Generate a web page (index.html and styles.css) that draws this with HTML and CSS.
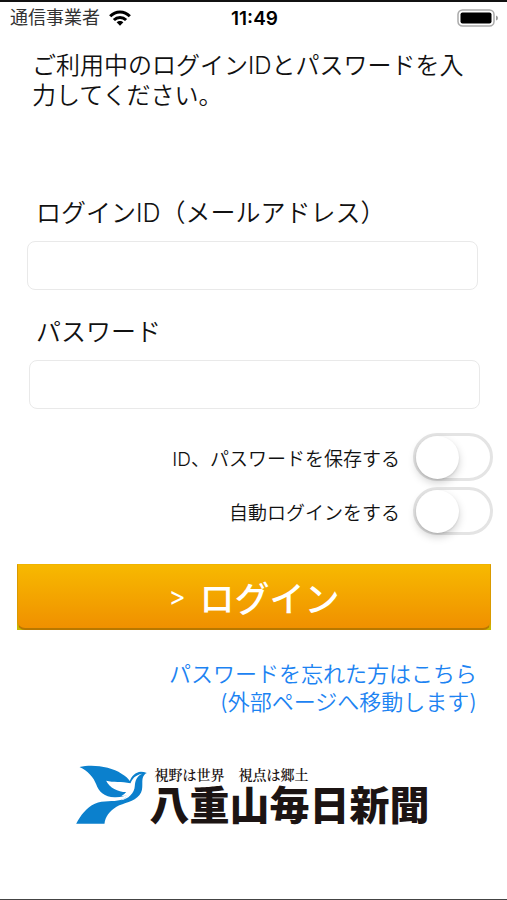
FILE: index.html
```html
<!DOCTYPE html>
<html lang="ja">
<head>
<meta charset="utf-8">
<meta name="viewport" content="width=device-width, initial-scale=1">
<title>ログイン</title>
<link rel="stylesheet" href="styles.css">
</head>
<body>
<header class="status">
  <div class="carrier">
    <span>通信事業者</span>
    <svg class="wifi" viewBox="0 0 22 16" aria-hidden="true">
      <g fill="none" stroke="#000" stroke-width="3">
        <path d="M1.2 6.2C6.6.5 15.4.5 20.8 6.2"/>
        <path d="M4.9 10C8.3 6.5 13.7 6.5 17.1 10"/>
      </g>
      <path d="M7.6 12.3C9.5 10.5 12.5 10.5 14.4 12.3L11 15.8Z"/>
    </svg>
  </div>
  <time class="clock">11:49</time>
  <svg class="battery" viewBox="0 0 42 18" aria-hidden="true">
    <rect x="1" y="1" width="36" height="16" rx="4.5" fill="#fff" stroke="#aaa" stroke-width="1.5"/>
    <rect x="3.5" y="3.5" width="31" height="11" rx="2"/>
    <path d="M39 6.5Q41 7 41 9T39 11.5Z" fill="#999"/>
  </svg>
</header>
<main>
  <p class="lead">ご利用中のログインIDとパスワードを入力してください。</p>
  <form class="login">
    <div class="field">
      <label for="login-id">ログインID（メールアドレス）</label>
      <input id="login-id" type="email">
    </div>
    <div class="field field-password">
      <label for="password">パスワード</label>
      <input id="password" type="password">
    </div>
    <div class="options">
      <label class="option">ID、パスワードを保存する<input class="switch" type="checkbox" role="switch"></label>
      <label class="option">自動ログインをする<input class="switch" type="checkbox" role="switch"></label>
    </div>
    <div class="submit-frame">
      <button class="submit" type="submit"><span class="arrow">&gt;</span>ログイン</button>
    </div>
  </form>
  <a class="forgot" href="#">パスワードを忘れた方はこちら<br>(外部ページへ移動します)</a>
  <div class="brand">
    <svg class="bird" viewBox="45 43 212 177" aria-hidden="true">
      <path fill="#0b80cd" d="M55 49C95 40 150 48 181 69Q199 79 206 91C211 76 223 64 239 63Q248 63 257 67Q247 71 244 85C242 103 247 117 235 133C219 154 188 156 166 168C145 181 132 198 130 219L45 219C59 193 76 170 101 159C127 148 156 154 178 148Q196 144 207 128Q187 141 160 140C130 139 113 124 105 101C97 79 80 61 55 49Z"/>
      <path fill="#fff" d="M135 90C156 96 181 91 208 98C213 84 222 73 243 69C226 77 222 90 221 105C220 127 202 145 178 149Q193 143 202 133Q190 137 181 136Q190 131 195 124C170 124 145 111 135 90Z"/>
    </svg>
    <div class="brand-text">
      <span class="tagline">視野は世界　視点は郷土</span>
      <span class="name">八重山毎日新聞</span>
    </div>
  </div>
</main>
</body>
</html>
```

FILE: styles.css
```css
* {
  box-sizing: border-box;
}

body {
  margin: 0;
  min-height: 100vh;
  border-top: 2px solid #111;
  border-bottom: 1px solid #444;
  background: #fff;
  color: #111;
  font-family: Inter, "Noto Sans CJK JP", sans-serif;
}

.status {
  display: grid;
  grid-template-columns: 1fr auto 1fr;
  align-items: center;
  height: 32px;
  padding: 0 8px 0 10px;
}

.carrier {
  display: flex;
  align-items: center;
  gap: 9px;
  color: #333;
  font-size: 18px;
  line-height: 32px;
}

.wifi {
  width: 22px;
  height: 16px;
}

.clock {
  color: #000;
  font-size: 19px;
  font-weight: 600;
}

.battery {
  justify-self: end;
  width: 42px;
  height: 18px;
}

.lead {
  margin: 17px 32px 0;
  font-size: 24px;
  font-weight: 350;
  line-height: 30px;
}

.login {
  margin-top: 84px;
}

.field {
  margin: 0 29px 0 27px;
}

.field label {
  display: block;
  padding-left: 9px;
  font-size: 25px;
  font-weight: 350;
  line-height: 36px;
}

.field input {
  display: block;
  width: 100%;
  height: 49px;
  margin-top: 10px;
  padding: 0 12px;
  border: 1px solid #e9e9e9;
  border-radius: 8px;
  background: #fff;
  font-size: 24px;
}

.field-password {
  margin: 24px 27px 0 29px;
}

.field-password label {
  padding-left: 7px;
}

.options {
  display: flex;
  flex-direction: column;
  gap: 6px;
  margin: 24px 14px 0;
}

.option {
  display: flex;
  align-items: center;
  justify-content: flex-end;
  gap: 13px;
  font-size: 19px;
  font-weight: 350;
}

.switch {
  appearance: none;
  width: 80px;
  height: 48px;
  margin: 0;
  border: 3px solid #e4e4e4;
  border-radius: 24px;
  background: #fff;
}

.switch::before {
  content: "";
  display: block;
  width: 43px;
  height: 43px;
  border-radius: 50%;
  background: #fff;
  box-shadow: 0 4px 8px rgba(0, 0, 0, 0.18), 0 1px 2px rgba(0, 0, 0, 0.1);
}

.switch:checked::before {
  margin-left: auto;
}

.submit-frame {
  margin: 29px 16px 0 17px;
  background: #c9b800;
}

.submit {
  display: flex;
  align-items: center;
  justify-content: center;
  gap: 14px;
  width: 100%;
  height: 66px;
  padding: 0;
  border: 1px solid #d99a00;
  border-top-color: #f0b400;
  border-bottom: 2px solid #b87800;
  border-radius: 0 0 8px 8px;
  background: linear-gradient(#f7b900, #f09000);
  color: #fff;
  font-family: inherit;
  font-size: 35px;
  font-weight: 500;
}

.arrow {
  font-size: 26px;
  font-weight: 400;
}

.forgot {
  display: block;
  margin: 30px 30px 0;
  color: #1c83f2;
  font-size: 22px;
  font-weight: 350;
  line-height: 28px;
  text-align: right;
  text-decoration: none;
}

.brand {
  display: flex;
  align-items: flex-start;
  justify-content: center;
  gap: 3px;
  margin: 49px 2px 0 0;
}

.bird {
  width: 71px;
  height: 59px;
}

.brand-text {
  display: flex;
  flex-direction: column;
  color: #1c1413;
}

.tagline {
  padding-left: 5px;
  font-family: "Noto Serif CJK JP", "Noto Sans CJK JP", serif;
  font-size: 14px;
  font-weight: 600;
  line-height: 18px;
}

.name {
  font-size: 40px;
  font-weight: 900;
  line-height: 46px;
}
```
